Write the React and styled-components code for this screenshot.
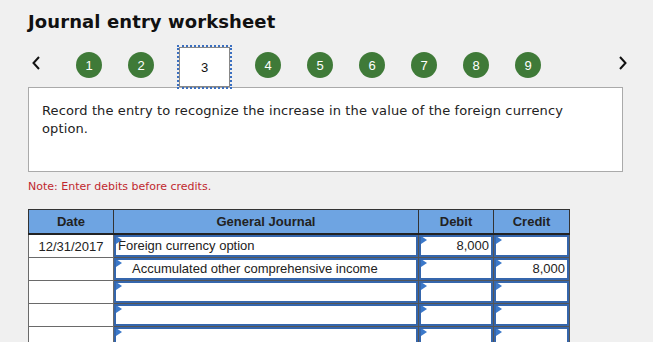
import { createGlobalStyle, styled } from 'styled-components';

const Global = createGlobalStyle`
    body {
        margin: 0;
        background: #f0f0f0;
        font-family: "DejaVu Sans", Verdana, sans-serif;
    }
`;

const Page = styled.div`
    padding: 11px 0 0 28px;
    width: 595px;
`;
const Title = styled.h1`
    margin: 0;
    font-size: 18px;
    line-height: 22px;
    font-weight: bold;
    letter-spacing: 0.1px;
    color: #111;
`;

// step navigation
const Nav = styled.div`
    display: flex;
    align-items: flex-start;
    height: 40px;
    margin-top: 14px;
    padding-left: 4px;
`;
const Arrow = styled.div`
    width: 8px;
    height: 14px;
    margin-top: 9px;
    margin-left: ${(p) => p.$ml || 0}px;
    margin-right: ${(p) => p.$mr || 0}px;
    display: flex;
`;
const Steps = styled.div`
    display: flex;
    align-items: flex-start;
    gap: 26px;
`;
const Circle = styled.div`
    width: 26px;
    height: 26px;
    margin-top: 5px;
    border-radius: 50%;
    background: #3f7a38;
    color: #fff;
    font: 13px "Liberation Sans", Arial, sans-serif;
    display: flex;
    align-items: center;
    justify-content: center;
`;
const Current = styled.div`
    width: 51px;
    height: 40px;
    box-sizing: border-box;
    margin: 0 -1px;
    border: 1px solid #888;
    outline: 2px dotted #3a6fc0;
    outline-offset: 0;
    background: #fff;
    color: #111;
    font: 13px "Liberation Sans", Arial, sans-serif;
    display: flex;
    align-items: center;
    justify-content: center;
`;

const Question = styled.div`
    box-sizing: border-box;
    height: 85px;
    border: 1px solid #aaa;
    background: #fff;
    padding: 14px 40px 14px 13px;
    font-size: 13px;
    line-height: 18px;
    letter-spacing: 0.12px;
    color: #222;
`;
const Note = styled.div`
    margin-top: 8px;
    font-size: 11px;
    line-height: 14px;
    color: #c0282e;
`;

// journal table
const Table = styled.table`
    margin-top: 15px;
    border-collapse: collapse;
    table-layout: fixed;
    width: 541px;
    font: 13px "Liberation Sans", Arial, sans-serif;
    color: #222;
`;
const Head = styled.th`
    background: #6ea4e2;
    border: 1px solid #333;
    border-bottom: 2px solid #222;
    height: 23px;
    padding: 0;
    font-weight: bold;
    text-align: center;
`;
const DateCell = styled.td`
    border: 1px solid #6a6a6a;
    background: #fff;
    height: 22px;
    padding: 0;
    text-align: center;
`;
const InputCell = styled.td`
    border: 1px solid #555;
    padding: 0;
    height: 22px;
`;
const Entry = styled.div`
    position: relative;
    box-sizing: border-box;
    height: 22px;
    border: 2px solid #3566ac;
    background: #fff;
    line-height: 18px;
    padding: 0 2px 0 ${(p) => p.$indent}px;
    text-align: ${(p) => (p.$right ? 'right' : 'left')};
    white-space: nowrap;
    overflow: hidden;
`;
const Marker = styled.span`
    position: absolute;
    top: -1px;
    left: 0;
    width: 0;
    height: 0;
    border-left: 6px solid #3b78c9;
    border-top: 4px solid transparent;
    border-bottom: 4px solid transparent;
`;

const Chevron = ({ dir }) => (
    <svg width="8" height="14" viewBox="0 0 8 14">
        <path
            d={dir === 'left' ? 'M7 1 L1.5 7 L7 13' : 'M1 1 L6.5 7 L1 13'}
            fill="none"
            stroke="#111"
            strokeWidth="2"
        />
    </svg>
);

const rows = [
    { date: '12/31/2017', account: 'Foreign currency option', debit: '8,000', credit: '' },
    { date: '', account: 'Accumulated other comprehensive income', debit: '', credit: '8,000', indent: true },
    { date: '', account: '', debit: '', credit: '' },
    { date: '', account: '', debit: '', credit: '' },
    { date: '', account: '', debit: '', credit: '' },
];

function Field({ value, right, indent }) {
    return (
        <InputCell>
            <Entry $right={right} $indent={indent ? 16 : 2}>
                <Marker />
                {value}
            </Entry>
        </InputCell>
    );
}

export default function App() {
    return (
        <>
            <Global />
            <Page>
                <Title>Journal entry worksheet</Title>
                <Nav>
                    <Arrow $mr={36}>
                        <Chevron dir="left" />
                    </Arrow>
                    <Steps>
                        {[1, 2, 3, 4, 5, 6, 7, 8, 9].map((n) =>
                            n === 3 ? <Current key={n}>{n}</Current> : <Circle key={n}>{n}</Circle>
                        )}
                    </Steps>
                    <Arrow $ml={78}>
                        <Chevron dir="right" />
                    </Arrow>
                </Nav>
                <Question>
                    Record the entry to recognize the increase in the value of the foreign currency
                    option.
                </Question>
                <Note>Note: Enter debits before credits.</Note>
                <Table>
                    <colgroup>
                        <col style={{ width: 85 }} />
                        <col style={{ width: 305 }} />
                        <col style={{ width: 75 }} />
                        <col style={{ width: 76 }} />
                    </colgroup>
                    <thead>
                        <tr>
                            <Head>Date</Head>
                            <Head>General Journal</Head>
                            <Head>Debit</Head>
                            <Head>Credit</Head>
                        </tr>
                    </thead>
                    <tbody>
                        {rows.map((r, i) => (
                            <tr key={i}>
                                <DateCell>{r.date}</DateCell>
                                <Field value={r.account} indent={r.indent} />
                                <Field value={r.debit} right />
                                <Field value={r.credit} right />
                            </tr>
                        ))}
                    </tbody>
                </Table>
            </Page>
        </>
    );
}
